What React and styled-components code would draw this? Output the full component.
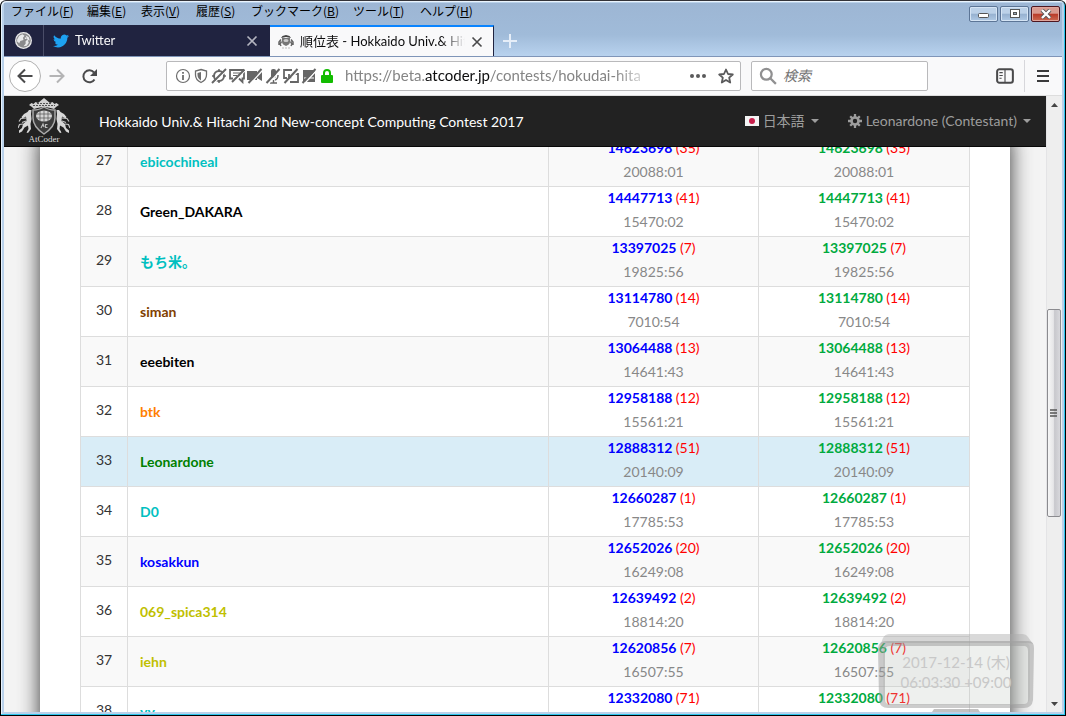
import React from 'react';
import styled, { createGlobalStyle } from 'styled-components';

const GlobalStyle = createGlobalStyle`
  *, *::before, *::after { box-sizing: border-box; }
  body { margin: 0; font-family: Lato, "Noto Sans CJK JP", sans-serif; font-size: 14px; color: #333; }
  button, input { font: inherit; color: inherit; }
  button { padding: 0; border: 0; background: none; display: flex; align-items: center; justify-content: center; }
  a { color: inherit; text-decoration: none; }
  svg { display: block; flex: none; }
`;

const Window = styled.div`
  height: 100vh;
  display: flex;
  flex-direction: column;
  background: #b9d1ea;
  border: 1px solid #000;
  border-top-color: #333338;
  border-radius: 6px 6px 0 0;
  box-shadow: inset -1px -1px 0 #2cc6ee, inset 1px 1px 0 #eaf3fc;
  padding: 1px 3px 3px;
  overflow: hidden;
`;

const TitleArea = styled.header`
  background: linear-gradient(#9db6d4, #a0bbd9 60%, #b8d2ee);
  border-bottom: 1px solid #7f95b8;
  flex: none;
  margin-top: 1px;
`;

const MenuRow = styled.div`
  display: flex;
  justify-content: space-between;
  height: 22px;
`;

const Menus = styled.nav`
  display: grid;
  grid-template-columns: 76px 54px 55px 55px 102px 67px 70px;
  align-items: start;
  padding-left: 7px;
  color: #000;
  font-family: "Noto Sans CJK JP", sans-serif;
  font-size: 12px;
  line-height: 16px;
`;

const MenuItem = styled.button`
  justify-content: flex-start;
  height: 16px;
  white-space: nowrap;
`;

const WindowButtons = styled.div`
  display: flex;
  gap: 2px;
  padding: 3px 2px 0 0;
`;

const WindowButton = styled.button`
  width: 29px;
  height: 16px;
  border: 1px solid ${p => (p.$close ? '#4d1620' : '#5c7596')};
  border-radius: 2px;
  box-shadow: inset 0 0 0 1px ${p => (p.$close ? '#e0a59c' : '#d5e4f4')};
  background: ${p => (p.$close
    ? 'linear-gradient(#d99a90 45%, #b93a28 50%, #cc6a52)'
    : 'linear-gradient(#bcd1e8 45%, #96b1d0 50%, #b0c9e4)')};
`;

const TabStrip = styled.div`
  display: flex;
  height: 31px;
`;

const Tab = styled.div`
  display: flex;
  align-items: center;
  width: ${p => (p.$pinned ? 40 : p.$active ? 224 : 226)}px;
  padding: 0 ${p => (p.$active ? 10 : 12)}px 0 ${p => (p.$active ? 8 : p.$pinned ? 11 : 9)}px;
  gap: 6px;
  color: ${p => (p.$active ? '#0c0c0d' : '#f9f9fa')};
  background: ${p => (p.$active ? '#f9f9fa' : '#202340')};
  border-top: ${p => (p.$active ? '2px solid #0a84ff' : '0')};
  border-right: ${p => (p.$pinned ? '1px solid #4a4d68' : p.$active ? '1px solid #202340' : '0')};
  font-size: 13px;
`;

const TabTitle = styled.span`
  flex: 1;
  min-width: 0;
  overflow: hidden;
  white-space: nowrap;
  line-height: 20px;
  padding-bottom: 2px;
  mask-image: linear-gradient(to left, transparent, #000 24px);
`;

const TabClose = styled.button`
  color: ${p => (p.$active ? '#4a4a4b' : '#b4b5c0')};
`;

const NewTab = styled.button`
  width: 32px;
`;

const Toolbar = styled.div`
  display: flex;
  align-items: center;
  flex: none;
  height: 39px;
  padding: 0 11px 0 5px;
  background: #f9f9fa;
  border-bottom: 1px solid #ddd;
`;

const NavButton = styled.button`
  width: 32px;
  height: 32px;
`;

const BackButton = styled(NavButton)`
  border: 1px solid #b1b1b1;
  border-radius: 50%;
  background: #fff;
`;

const UrlBox = styled.div`
  display: flex;
  align-items: center;
  flex: 1;
  min-width: 0;
  height: 30px;
  margin-left: 61px;
  padding: 0 6px 0 8px;
  background: #fff;
  border: 1px solid #b9b9bb;
  border-radius: 2px;
`;

const Permissions = styled.div`
  display: flex;
  gap: 2px;
  margin-right: 10px;
`;

const Address = styled.div`
  flex: 1;
  min-width: 0;
  margin-right: 36px;
  overflow: hidden;
  white-space: nowrap;
  color: #858585;
  font-size: 15px;
  line-height: 24px;
  padding-bottom: 2px;
  mask-image: linear-gradient(to left, transparent, #000 40px);
  b { font-weight: 400; color: #0c0c0d; }
`;

const UrlActions = styled.div`
  display: flex;
  gap: 12px;
`;

const SearchBox = styled.label`
  display: flex;
  align-items: center;
  gap: 6px;
  width: 177px;
  height: 30px;
  margin: 0 68px 0 10px;
  padding: 0 7px;
  background: #fff;
  border: 1px solid #b9b9bb;
  border-radius: 2px;
`;

const SearchInput = styled.input`
  flex: 1;
  min-width: 0;
  border: 0;
  padding: 0 0 2px;
  outline: 0;
  background: none;
  font-family: "Noto Sans CJK JP", sans-serif;
  &::placeholder { color: #737373; font-style: italic; opacity: 1; }
`;

const ToolIcons = styled.div`
  display: flex;
  align-items: center;
  height: 32px;
  gap: 10px;
`;

const Divider = styled.span`
  width: 1px;
  height: 32px;
  background: #d7d7db;
`;

const Viewport = styled.div`
  display: flex;
  flex: 1;
  min-height: 0;
`;

const Page = styled.div`
  position: relative;
  display: flex;
  flex-direction: column;
  flex: 1;
  min-width: 0;
  background: #f4f4f4;
`;

const SiteNav = styled.nav`
  display: flex;
  align-items: center;
  flex: none;
  height: 51px;
  padding: 0 15px 0 14px;
  background: #222;
  border-bottom: 1px solid #080808;
  color: #9d9d9d;
`;

const ContestTitle = styled.a`
  margin-left: 29px;
  color: #fff;
`;

const NavRight = styled.div`
  display: flex;
  gap: 29px;
  margin-left: auto;
`;

const NavMenu = styled.button`
  gap: 4px;
  line-height: 20px;
  white-space: nowrap;
`;

const Flag = styled.span`
  display: flex;
  align-items: center;
  justify-content: center;
  width: 14px;
  height: 10px;
  background: #f4f4f4;
  &::before { content: ""; width: 6px; height: 6px; border-radius: 50%; background: #c8204c; }
`;

const Caret = styled.span`
  border: 4px solid transparent;
  border-top-color: currentColor;
  border-bottom: 0;
  margin-left: 2px;
`;

const Scroller = styled.div`
  flex: 1;
  min-height: 0;
  overflow: hidden;
  padding: 0 36px;
`;

const Main = styled.main`
  min-height: 100%;
  padding: 0 40px;
  background: #fff;
  box-shadow: 0 0 20px #333;
`;

const Standings = styled.table`
  width: 100%;
  margin-top: -11px;
  table-layout: fixed;
  border-collapse: collapse;
`;

const Row = styled.tr`
  height: 50px;
  background: ${p => (p.$me ? '#d9edf7' : p.$odd ? '#f9f9f9' : '#fff')};
`;

const Cell = styled.td`
  padding: 0;
  border: 1px solid #ddd;
  text-align: center;
  line-height: 24px;
`;

const RankCell = styled(Cell)`
  padding-bottom: 4px;
`;

const NameCell = styled(Cell)`
  padding-left: 12px;
  text-align: left;
  font-weight: 700;
`;

const ResultCell = styled(Cell)`
  vertical-align: top;
`;

const UserLink = styled.a`
  color: ${p => p.$color};
`;

const Points = styled.div`
  height: 24px;
  line-height: 22px;
  font-weight: 700;
  color: ${p => p.$color};
`;

const Penalty = styled.span`
  font-weight: 400;
  color: #f00;
`;

const Elapsed = styled.div`
  height: 24px;
  line-height: 22px;
  color: #888;
`;

const Clock = styled.div`
  position: absolute;
  right: 10px;
  bottom: 0;
  width: 158px;
  height: 78px;
`;

const ClockText = styled.time`
  position: absolute;
  inset: 18px 2px 0 0;
  text-align: center;
  color: #c8c8c8;
  font-size: 15px;
  line-height: 20px;
`;

const Scrollbar = styled.div`
  display: flex;
  flex-direction: column;
  align-items: center;
  width: 16px;
  background: #eee;
  border-left: 1px solid #e4e4e6;
`;

const ScrollArrow = styled.button`
  width: 15px;
  height: 17px;
`;

const Thumb = styled.div`
  display: flex;
  align-items: center;
  justify-content: center;
  width: 14px;
  height: 208px;
  margin-right: 1px;
  border: 1px solid #8b8b8f;
  border-radius: 2px;
  background: linear-gradient(90deg, #f6f6f6, #e6e6e8 45%, #c8c8cd 55%, #d8d8dc);
`;

const Spring = styled.span`
  flex: ${p => p.$grow};
`;

const CYAN = '#00c0c0';
const YELLOW = '#c0c000';

const ROWS = [
  [27, 'ebicochineal', CYAN, '14623698', 35, '20088:01'],
  [28, 'Green_DAKARA', '#000', '14447713', 41, '15470:02'],
  [29, 'もち米。', CYAN, '13397025', 7, '19825:56'],
  [30, 'siman', '#804000', '13114780', 14, '7010:54'],
  [31, 'eeebiten', '#000', '13064488', 13, '14641:43'],
  [32, 'btk', '#ff8000', '12958188', 12, '15561:21'],
  [33, 'Leonardone', '#008000', '12888312', 51, '20140:09'],
  [34, 'D0', CYAN, '12660287', 1, '17785:53'],
  [35, 'kosakkun', '#00f', '12652026', 20, '16249:08'],
  [36, '069_spica314', YELLOW, '12639492', 2, '18814:20'],
  [37, 'iehn', YELLOW, '12620856', 7, '16507:55'],
  [38, 'yy', CYAN, '12332080', 71, ''],
];

const MENUS = [['ファイル', 'F'], ['編集', 'E'], ['表示', 'V'], ['履歴', 'S'], ['ブックマーク', 'B'], ['ツール', 'T'], ['ヘルプ', 'H']];

const Icon = ({ size = 16, children, ...rest }) => (
  <svg width={size} height={size} viewBox="0 0 16 16" fill="none" stroke="currentColor" strokeWidth="2" aria-hidden="true" {...rest}>{children}</svg>
);

const GlobeIcon = () => (
  <Icon size={17} stroke="none">
    <circle cx="8" cy="8" r="8" fill="#e9e9ea" />
    <circle cx="8" cy="8" r="6.800" fill="#8a8a8c" />
    <path d="M2 7l2-3.500 3-1.500 2 1.500-1.500 2 .5 2L5 8.500l-1 2L2 9zM10 3l3 2 .8 3-2.300-.5-1.500 1V11l-2 2.500 3-.5 2-3M9 5.500l1.500-.5.5 1.500H9.500z" fill="#e9e9ea" />
  </Icon>
);

const TwitterIcon = () => (
  <svg width="16" height="16" viewBox="0 0 24 24" fill="#1da1f2" aria-hidden="true">
    <path d="M24 4.600a10 10 0 0 1-2.800.8 5 5 0 0 0 2.200-2.700c-1 .6-2 1-3.100 1.200a4.900 4.900 0 0 0-8.400 4.500A14 14 0 0 1 1.700 3.200a4.900 4.900 0 0 0 1.500 6.500 5 5 0 0 1-2.200-.6 4.900 4.900 0 0 0 3.900 4.900 5 5 0 0 1-2.200.1 4.900 4.900 0 0 0 4.600 3.400A9.900 9.900 0 0 1 0 19.500a14 14 0 0 0 7.500 2.200c9.100 0 14.300-7.700 14-14.600A10 10 0 0 0 24 4.600z" />
  </svg>
);

const Horse = () => (
  <>
    <path d="M11 12l-1.500 2L6 16l-2.500 3 1 1.500L8 18.500l.5 4.500L5 26l-1 4-3 2.500V35l3-1.500 2.500-4 3.500-2 .5 3.500-2 3.500 1.500.5 3-4-.5-5 1-5-.5-5 .5-4z" fill="#d8d8d8" />
    <path d="M8 20l-5 .5-2 3M5 26l-3.500.5L0 30M8 23l-4 1.500" fill="none" stroke="#c4c4c4" strokeWidth="1.200" />
  </>
);

const Crest = () => (
  <svg width="52" height="46" viewBox="0 0 52 46" aria-hidden="true">
    <path d="M14 9l-3-2 2.500-2 2 1 2-2 2.500 1L23 2.500 26 0l3 2.500L32 5l2.500-1 2 2 2-1L41 7l-3 2-2 2c-6-2.500-14-2.500-20 0z" fill="#d2d2d2" />
    <path d="M15 7.500h22M19 5.500h14" stroke="#555" strokeWidth="1" strokeDasharray="2 1" />
    <path d="M15 12c5 0 8-1 11-3 3 2 6 3 11 3v8c0 7-5 12-11 16-6-4-11-9-11-16z" fill="#3c3c3c" stroke="#aaa" strokeWidth="1.500" />
    <ellipse cx="26" cy="18" rx="8" ry="5.500" fill="#d5d5d5" />
    <path d="M18 16h16M18 20h16M22 12.500v11M26 12v12M30 12.500v11" stroke="#555" strokeWidth=".7" />
    <path d="M23 30l2-4 1 3M29.500 26.500h-2v3h2" fill="none" stroke="#bbb" strokeWidth="1.200" />
    <Horse />
    <g transform="translate(52 0) scale(-1 1)"><Horse /></g>
    <text x="26" y="44" textAnchor="middle" fontFamily="Liberation Serif, serif" fontSize="9" fill="#ddd">AtCoder</text>
  </svg>
);

const Favicon = () => (
  <svg width="16" height="16" viewBox="0 0 16 16" aria-hidden="true">
    <path d="M3 4l1.500-2L8 1l3.500 1L13 4 8 3z" fill="#444" />
    <path d="M4 4h8v4c0 2-2 3-4 4-2-1-4-2-4-4z" fill="#777" />
    <ellipse cx="8" cy="6.500" rx="2.500" ry="1.500" fill="#ccc" />
    <path d="M3 5.500L1 8v3M3.500 7.500L2 10l1 2M13 5.500L15 8v3M12.500 7.500L14 10l-1 2" fill="none" stroke="#666" strokeWidth="1.500" />
    <path d="M4 14h8" stroke="#bbb" strokeDasharray="2 1" />
  </svg>
);

const CloseIcon = () => <Icon size={12} strokeWidth="2.200"><path d="M2 2l12 12M14 2L2 14" /></Icon>;

const PermissionIcons = () => (
  <Permissions>
    <Icon color="#6d6d6d" strokeWidth="1.200"><circle cx="8" cy="8" r="6.500" /><path d="M8 7v5M8 4v1.800" strokeWidth="1.800" /></Icon>
    <Icon color="#6d6d6d" strokeWidth="1.300"><path d="M8 1.500l5.500 1.500v4c0 3.500-2.500 6-5.500 7.500C5 13 2.500 10.500 2.500 7V3z" /><path d="M8 4v8.500C5.500 11 4.500 9 4.500 7V5z" fill="currentColor" stroke="none" /></Icon>
    <Icon color="#666"><circle cx="8" cy="8" r="5" /><path d="M1 8h3M8 12v3M12 8h3M8 1v3" strokeWidth="1.500" /><path d="M15 3L3 15" stroke="#fff" strokeWidth="1.200" /><path d="M15 1L1 15" /></Icon>
    <Icon color="#666"><path d="M15 2H1v8.500h3M15 2v8.500h-1.500V14L10 10.500" strokeWidth="1.800" /><path d="M4 5h7M4 7.500h4" strokeWidth="1.200" /><path d="M16 3L5 14" stroke="#fff" strokeWidth="1.200" /><path d="M15.500 1.500L3 14" /></Icon>
    <Icon color="#666"><path d="M0 3h10v9H0zM10 7l5-4v10l-5-3z" fill="currentColor" stroke="none" /><path d="M16 2L4 15" stroke="#fff" strokeWidth="1.500" /><path d="M14.500 1L1.500 15" /></Icon>
    <Icon color="#666"><rect x="6" y="1" width="5" height="9" rx="2" fill="currentColor" stroke="none" /><path d="M10 12c2-.5 3-2.500 3-5M8.500 12v3M5 15h7" strokeWidth="1.500" /><path d="M16 2L4 15" stroke="#fff" strokeWidth="1.500" /><path d="M14.500 1L1.500 15" /></Icon>
    <Icon color="#666"><path d="M9 2H1v8h3M7 14h8V6h-3M6 6v4h3" strokeWidth="1.800" /><path d="M16 2L4 15" stroke="#fff" strokeWidth="1.200" /><path d="M14.500 1L1.500 15" /></Icon>
    <Icon color="#666"><path d="M2 2h12v12H2z" fill="currentColor" stroke="none" /><path d="M3 10h10" stroke="#fff" strokeWidth="1" /><path d="M16 2L4 15" stroke="#fff" strokeWidth="1.500" /><path d="M14.500 1L1.500 15" /></Icon>
    <Icon color="#12bc00"><rect x="2" y="7" width="12" height="8" rx="1" fill="currentColor" stroke="none" /><path d="M5 8V5a3 3 0 0 1 6 0v3" /></Icon>
  </Permissions>
);

const GearIcon = () => (
  <Icon size={14} strokeWidth="3"><circle cx="8" cy="8" r="4" /><path d="M8 0v4M8 12v4M0 8h4M12 8h4M2.500 2.500l2.500 2.500M11 11l2.500 2.500M13.500 2.500L11 5M5 11l-2.500 2.500" strokeWidth="2.600" /></Icon>
);

const ScoreCell = ({ color, points, penalty, time }) => (
  <ResultCell>
    <Points $color={color}>{points} <Penalty>({penalty})</Penalty></Points>
    <Elapsed>{time}</Elapsed>
  </ResultCell>
);

export default function App() {
  return (
    <>
      <GlobalStyle />
      <Window>
        <TitleArea>
          <MenuRow>
            <Menus>
              {MENUS.map(([label, key]) => <MenuItem key={key}>{label}(<u>{key}</u>)</MenuItem>)}
            </Menus>
            <WindowButtons>
              <WindowButton aria-label="Minimize"><svg width="13" height="10"><rect x="1.500" y="4.500" width="10" height="4" rx="1" fill="#fff" stroke="#555" /></svg></WindowButton>
              <WindowButton aria-label="Restore"><svg width="12" height="10"><rect x="1.500" y=".5" width="9" height="8" fill="#fff" stroke="#555" /><rect x="4.500" y="3.500" width="3" height="2" fill="#9ab" stroke="#555" /></svg></WindowButton>
              <WindowButton $close aria-label="Close"><svg width="12" height="10"><path d="M2 1l8 8M10 1L2 9" stroke="#555" strokeWidth="4" /><path d="M2 1l8 8M10 1L2 9" stroke="#fff" strokeWidth="2.400" /></svg></WindowButton>
            </WindowButtons>
          </MenuRow>
          <TabStrip>
            <Tab $pinned><GlobeIcon /></Tab>
            <Tab><TwitterIcon /><TabTitle>Twitter</TabTitle><TabClose aria-label="Close tab"><CloseIcon /></TabClose></Tab>
            <Tab $active><Favicon /><TabTitle>順位表 - Hokkaido Univ.&amp; Hit</TabTitle><TabClose $active aria-label="Close tab"><CloseIcon /></TabClose></Tab>
            <NewTab aria-label="New tab"><Icon color="#e6eef8"><path d="M8 1v14M1 8h14" /></Icon></NewTab>
          </TabStrip>
        </TitleArea>
        <Toolbar>
          <BackButton aria-label="Back"><Icon color="#4a4a4b"><path d="M15.500 8H1.500M8 1.500L1.500 8 8 14.500" /></Icon></BackButton>
          <NavButton aria-label="Forward"><Icon color="#b4b4b5"><path d="M.5 8h14M8 1.500L14.500 8 8 14.500" /></Icon></NavButton>
          <NavButton aria-label="Reload"><Icon color="#4a4a4b"><path d="M13.500 11.500A6 6 0 1 1 13 4.500" /><path d="M16 1v7H9z" fill="currentColor" stroke="none" /></Icon></NavButton>
          <UrlBox>
            <PermissionIcons />
            <Address>https://beta.<b>atcoder.jp</b>/contests/hokudai-hita</Address>
            <UrlActions>
              <button aria-label="Page actions"><Icon color="#5a5a5b" stroke="none" fill="currentColor"><circle cx="2" cy="8" r="2" /><circle cx="8" cy="8" r="2" /><circle cx="14" cy="8" r="2" /></Icon></button>
              <button aria-label="Bookmark"><Icon color="#5a5a5b" strokeWidth="1.800"><path d="M8 1.500l2 4.500 4.800.5-3.600 3.200 1 4.800L8 12l-4.200 2.500 1-4.800L1.200 6.500 6 6z" strokeLinejoin="round" /></Icon></button>
            </UrlActions>
          </UrlBox>
          <SearchBox>
            <Icon size={18} color="#909091"><circle cx="6.500" cy="6.500" r="4.800" /><path d="M10 10l5 5" /></Icon>
            <SearchInput placeholder="検索" aria-label="検索" />
          </SearchBox>
          <ToolIcons>
            <button aria-label="Sidebars"><Icon size={18} color="#4a4a4b" strokeWidth="1.800"><rect x="1" y="2" width="14" height="12" rx="2" /><path d="M8 2v12" strokeWidth="1" /><path d="M3 5h3M3 7.500h3M3 10h2" strokeWidth="1" /></Icon></button>
            <Divider />
            <button aria-label="Menu"><Icon color="#3a3a3b"><path d="M2 3h12M2 8h12M2 13h12" /></Icon></button>
          </ToolIcons>
        </Toolbar>
        <Viewport>
          <Page>
            <SiteNav>
              <a href="#home" aria-label="AtCoder"><Crest /></a>
              <ContestTitle href="#contest">Hokkaido Univ.&amp; Hitachi 2nd New-concept Computing Contest 2017</ContestTitle>
              <NavRight>
                <NavMenu><Flag />日本語 <Caret /></NavMenu>
                <NavMenu><GearIcon />Leonardone (Contestant) <Caret /></NavMenu>
              </NavRight>
            </SiteNav>
            <Scroller>
              <Main>
                <Standings>
                  <colgroup><col width="47" /><col /><col width="210" /><col width="211" /></colgroup>
                  <tbody>
                    {ROWS.map(([rank, name, color, points, penalty, time]) => (
                      <Row key={rank} $me={name === 'Leonardone'} $odd={rank % 2 === 1}>
                        <RankCell>{rank}</RankCell>
                        <NameCell><UserLink href={`#${name}`} $color={color}>{name}</UserLink></NameCell>
                        <ScoreCell color="#00f" points={points} penalty={penalty} time={time} />
                        <ScoreCell color="#00aa3e" points={points} penalty={penalty} time={time} />
                      </Row>
                    ))}
                  </tbody>
                </Standings>
              </Main>
            </Scroller>
            <Clock>
              <svg width="158" height="78" viewBox="0 0 158 78" aria-hidden="true">
                <rect x="5" y="7" width="147" height="64" rx="8" fill="#bcc4bc" fillOpacity=".25" />
                <path d="M12 0h132q4 0 6 3l5 7q-2-1-5-1H8q-4 0-6 3l3-8q2-4 7-4z" fill="#aaa" fillOpacity=".45" />
                <path fillRule="evenodd" d="M8 7h142q6 0 6 7l-1 52q-1 8-9 8H10q-8 0-9-8L0 14q1-7 8-7zM12 12q-5 0-5 5v49q0 4 4 4h135q4 0 4-4V17q0-5-4-5z" fill="#999" fillOpacity=".5" />
                <path d="M56 75h44l2 3H54z" fill="#999" fillOpacity=".6" />
              </svg>
              <ClockText>2017-12-14 (木)<br />06:03:30 +09:00</ClockText>
            </Clock>
          </Page>
          <Scrollbar>
            <ScrollArrow aria-label="Scroll up"><svg width="7" height="4"><path d="M0 4l3.500-4L7 4z" fill="#444" /></svg></ScrollArrow>
            <Spring $grow={196} />
            <Thumb><svg width="8" height="9"><path d="M0 1h7M0 4h7M0 7h7" stroke="#555" strokeWidth="1.500" /></svg></Thumb>
            <Spring $grow={178} />
            <ScrollArrow aria-label="Scroll down"><svg width="7" height="4"><path d="M0 0l3.500 4L7 0z" fill="#444" /></svg></ScrollArrow>
          </Scrollbar>
        </Viewport>
      </Window>
    </>
  );
}
